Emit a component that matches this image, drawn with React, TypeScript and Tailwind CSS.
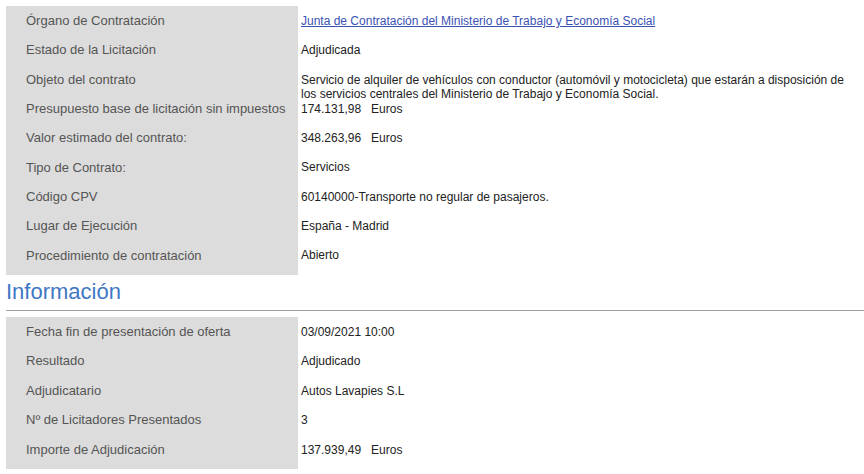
type Row = { label: string; value: React.ReactNode };

const general: Row[] = [
  {
    label: "Órgano de Contratación",
    value: (
      <a href="#" className="text-[#3a52b4] underline">
        Junta de Contratación del Ministerio de Trabajo y Economía Social
      </a>
    ),
  },
  { label: "Estado de la Licitación", value: "Adjudicada" },
  {
    label: "Objeto del contrato",
    value:
      "Servicio de alquiler de vehículos con conductor (automóvil y motocicleta) que estarán a disposición de los servicios centrales del Ministerio de Trabajo y Economía Social.",
  },
  { label: "Presupuesto base de licitación sin impuestos", value: "174.131,98   Euros" },
  { label: "Valor estimado del contrato:", value: "348.263,96   Euros" },
  { label: "Tipo de Contrato:", value: "Servicios" },
  { label: "Código CPV", value: "60140000-Transporte no regular de pasajeros." },
  { label: "Lugar de Ejecución", value: "España - Madrid" },
  { label: "Procedimiento de contratación", value: "Abierto" },
];

const info: Row[] = [
  { label: "Fecha fin de presentación de oferta", value: "03/09/2021 10:00" },
  { label: "Resultado", value: "Adjudicado" },
  { label: "Adjudicatario", value: "Autos Lavapies S.L" },
  { label: "Nº de Licitadores Presentados", value: "3" },
  { label: "Importe de Adjudicación", value: "137.939,49   Euros" },
];

const DataTable = ({ rows, rowH }: { rows: Row[]; rowH: string }) => (
  <div className="flex">
    {/* label column */}
    <div className="w-[292px] shrink-0 bg-[#dcdcdc] pb-[5px]">
      {rows.map((r) => (
        <div
          key={r.label}
          className={`${rowH} flex items-center pl-[20px] text-[13px] leading-[15px] text-[#555]`}
        >
          {r.label}
        </div>
      ))}
    </div>
    {/* value column */}
    <div className="pl-[3px] w-[558px]">
      {rows.map((r) => (
        <div key={r.label} className={`${rowH} pt-[8px]`}>
          <div className="text-[12px] leading-[14px] text-[#222] whitespace-pre-wrap">
            {r.value}
          </div>
        </div>
      ))}
    </div>
  </div>
);

export default function App() {
  return (
    <div className="min-h-[474px] bg-white pl-[6px] pt-[6px] font-['Liberation_Sans',Arial,sans-serif]">
      <DataTable rows={general} rowH="h-[29.3px]" />

      <div className="border-b border-[#9e9e9e] pt-[4px] pb-[6px]">
        <h2 className="text-[22px] leading-[25px] text-[#3f78c4] font-normal">Información</h2>
      </div>

      <div className="mt-[6px]">
        <DataTable rows={info} rowH="h-[29.5px]" />
      </div>
    </div>
  );
}
